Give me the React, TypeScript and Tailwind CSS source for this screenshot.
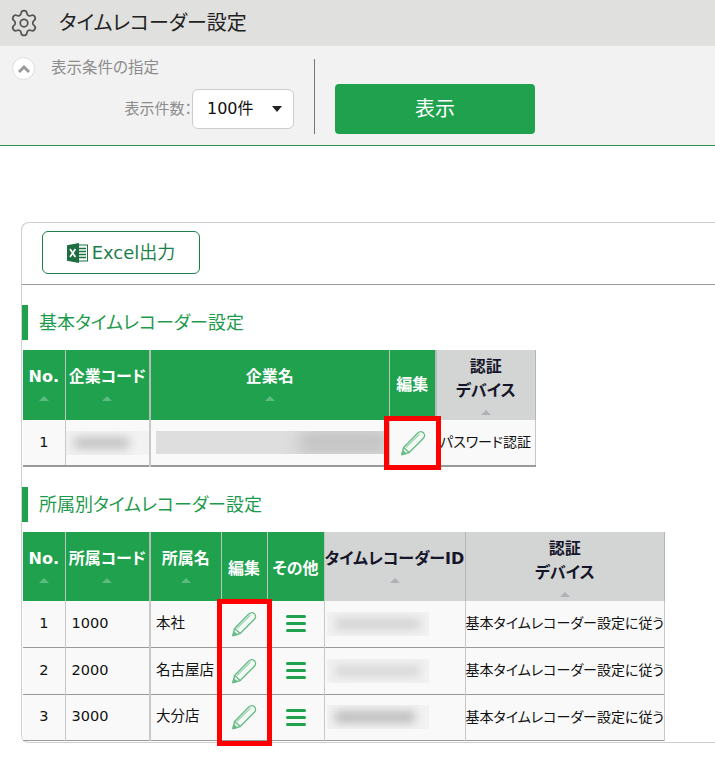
import { Settings } from "lucide-react";

const FONT = "font-['DejaVu_Sans','Noto_Sans_CJK_JP',sans-serif] [font-feature-settings:'palt']";

function Pencil() {
  return (
    <svg viewBox="0 0 26 26" className="h-[26px] w-[26px]" fill="none" stroke="#68bb86" strokeWidth="1.4" strokeLinejoin="round">
      <path d="M2 24.5 L3.6 17.4 L17.8 3 C19.2 1.6 21.6 1.3 23.4 2.8 C25 4.4 24.8 6.8 23.4 8.2 L9.2 22.6 Z" fill="#f3faf6" />
      <path d="M3.6 17.4 L9.2 22.6" />
      <path d="M2 24.5 L2.8 20.9 L5.7 23.6 Z" fill="#68bb86" />
      <path d="M6 17.5 L19.6 4" strokeWidth="1" />
    </svg>
  );
}

function Burger() {
  return (
    <div className="flex w-5 flex-col gap-1">
      <span className="h-[3px] rounded-sm bg-[#1fa14e]" />
      <span className="h-[3px] rounded-sm bg-[#1fa14e]" />
      <span className="h-[3px] rounded-sm bg-[#1fa14e]" />
    </div>
  );
}

function ExcelIcon() {
  return (
    <svg viewBox="0 0 21 20" className="h-5 w-[21px]">
      <rect x="9" y="2" width="11.5" height="16" fill="#fff" stroke="#1d6f42" strokeWidth="1" />
      <path d="M12 5.5h7M12 8.5h7M12 11.5h7M12 14.5h7" stroke="#1d6f42" strokeWidth="1.6" />
      <path d="M0 2.2 L12 0 V20 L0 17.8 Z" fill="#1d6f42" />
      <path d="M3 6 L8.4 14 M8.4 6 L3 14" stroke="#fff" strokeWidth="1.7" />
    </svg>
  );
}

function Sort() {
  return <span className="mx-auto mt-[7px] block h-0 w-0 border-x-[5px] border-b-[5px] border-x-transparent border-b-[#5dba80]" />;
}

function SortGray() {
  return <span className="mx-auto mt-[7px] block h-0 w-0 border-x-[5px] border-b-[5px] border-x-transparent border-b-[#aeb2b6]" />;
}

function Blur({ w, tone }: { w: string; tone: string }) {
  return (
    <div className="h-6 overflow-hidden bg-[#f2f2f2]">
      <div className={`ml-2 mt-[6px] h-3 blur-[5px] ${w} ${tone}`} />
    </div>
  );
}

const GH = "border-r border-[#b7c9bd] bg-[#1fa14e] p-0 text-center align-middle text-[16px] font-bold leading-6 text-white";
const GYH = "border-r border-[#b4b6b6] bg-[#d3d5d5] p-0 text-center align-middle text-[16px] font-bold leading-6 text-[#16162a]";
const TD = "border-r border-[#c8c8c8] bg-[#f9f9f9] p-0 text-[14.5px] text-[#111]";

function SectionTitle({ children }: { children: string }) {
  return (
    <div className="flex h-[35px] items-center">
      <span className="h-full w-[6px] bg-[#1fa14e]" />
      <h2 className="ml-[11px] text-[18px] font-normal text-[#1e9a4c]">{children}</h2>
    </div>
  );
}

const ROWS = [
  { no: 1, code: "1000", name: "本社", h: "h-[46px]", w: "w-[85px]", tone: "bg-[#d4d4d4]" },
  { no: 2, code: "2000", name: "名古屋店", h: "h-[47px]", w: "w-[85px]", tone: "bg-[#d8d8d8]" },
  { no: 3, code: "3000", name: "大分店", h: "h-[46px]", w: "w-[80px]", tone: "bg-[#bdbdbd]" },
];

export default function App() {
  return (
    <div className={`relative h-[757px] w-[715px] overflow-hidden bg-white ${FONT}`}>
      <header className="flex h-[46px] items-center bg-[#e0e0de] pl-[9px]">
        <Settings className="h-[30px] w-[30px] text-[#555]" strokeWidth={1.4} />
        <h1 className="ml-[20px] text-[20px] font-normal text-[#222]">タイムレコーダー設定</h1>
      </header>

      <section className="flex h-[100px] border-b border-[#2f8f57] bg-[#f2f2f2]">
        <div className="relative mb-[11px] mt-[13px] w-[315px] border-r border-[#777]">
          <div className="-mt-[2px] flex items-center pl-3">
            <span className="flex h-[23px] w-[23px] items-center justify-center rounded-full border border-[#ddd] bg-white">
              <svg viewBox="0 0 14 10" className="h-[10px] w-[14px]" fill="none" stroke="#9a9a9a" strokeWidth="3">
                <path d="M2 8 L7 3 L12 8" />
              </svg>
            </span>
            <span className="ml-4 text-[15.5px] text-[#8c8c8c]">表示条件の指定</span>
          </div>
          <div className="mt-[9px] flex items-center justify-end pr-5">
            <span className="text-[15px] text-[#8c8c8c]">表示件数：</span>
            <div className="flex h-10 w-[102px] items-center justify-between rounded-md border border-[#ccc] bg-white pl-[14px] pr-[11px]">
              <span className="text-[16px] text-[#111]">100件</span>
              <span className="h-0 w-0 border-x-[5px] border-t-[6px] border-x-transparent border-t-[#222]" />
            </div>
          </div>
        </div>
        <div className="ml-5 mt-[38px]">
          <button className="h-[50px] w-[200px] rounded bg-[#1fa14e] text-[20px] text-white">表示</button>
        </div>
      </section>

      <main className="ml-[21px] mt-[76px] h-[521px] w-[720px] rounded-l-lg border border-r-0 border-[#cfcfcf]">
        <div className="h-[62px] border-b border-[#999] pl-5 pt-2">
          <button className="flex h-[43px] w-[158px] items-center justify-center gap-1 rounded-md border border-[#1e7f4a] text-[18px] text-[#1f7f4c]">
            <ExcelIcon />
            Excel出力
          </button>
        </div>

        <div className="mt-5">
          <SectionTitle>基本タイムレコーダー設定</SectionTitle>
        </div>
        <table className="ml-px mt-[10px] table-fixed border-collapse">
          <colgroup>
            <col className="w-[42px]" />
            <col className="w-[85px]" />
            <col className="w-[239px]" />
            <col className="w-[47px]" />
            <col className="w-[99px]" />
          </colgroup>
          <thead>
            <tr className="h-[70px]">
              <th className={GH}><div className="-mt-1">No.<Sort /></div></th>
              <th className={`${GH} border-r-2 border-r-[#b5bdb8]`}><div className="-mt-1">企業コード<Sort /></div></th>
              <th className={GH}><div className="-mt-1">企業名<Sort /></div></th>
              <th className={`${GH} border-r-2 border-r-[#b5bdb8]`}>編集</th>
              <th className={GYH}>
                <div>認証<br />デバイス<SortGray /></div>
              </th>
            </tr>
          </thead>
          <tbody>
            <tr className="h-[46px] border-b-2 border-[#999]">
              <td className={`${TD} text-center`}>1</td>
              <td className={`${TD} border-r-2`}><Blur w="w-[55px]" tone="bg-[#c4c4c4]" /></td>
              <td className={`${TD} pl-[5px]`}>
                <div className="h-[23px] overflow-hidden bg-[#dedede]"><div className="ml-auto h-full w-[90px] bg-[#c2c2c2] blur-[8px]" /></div>
              </td>
              <td className={`${TD} bg-[#e2f2e8]`}><div className="flex justify-center"><Pencil /></div></td>
              <td className={`${TD} whitespace-nowrap text-center text-[14px]`}>パスワード認証</td>
            </tr>
          </tbody>
        </table>

        <div className="mt-[20px]">
          <SectionTitle>所属別タイムレコーダー設定</SectionTitle>
        </div>
        <table className="ml-px mt-[10px] table-fixed border-collapse">
          <colgroup>
            <col className="w-[42px]" />
            <col className="w-[85px]" />
            <col className="w-[71px]" />
            <col className="w-[46px]" />
            <col className="w-[57px]" />
            <col className="w-[141px]" />
            <col className="w-[198px]" />
          </colgroup>
          <thead>
            <tr className="h-[69px]">
              <th className={GH}><div className="-mt-1">No.<Sort /></div></th>
              <th className={`${GH} border-r-2 border-r-[#b5bdb8]`}><div className="-mt-1">所属コード<Sort /></div></th>
              <th className={GH}><div className="-mt-1">所属名<Sort /></div></th>
              <th className={GH}><div className="mt-1">編集</div></th>
              <th className={GH}><div className="mt-1">その他</div></th>
              <th className={GYH}><div className="-mt-1">タイムレコーダーID<SortGray /></div></th>
              <th className={GYH}>
                <div>認証<br />デバイス<SortGray /></div>
              </th>
            </tr>
          </thead>
          <tbody>
            {ROWS.map((row) => (
              <tr key={row.no} className={`${row.h} border-b border-[#999]`}>
                <td className={`${TD} text-center`}>{row.no}</td>
                <td className={`${TD} border-r-2 pl-[6px]`}>{row.code}</td>
                <td className={`${TD} whitespace-nowrap pl-[5px]`}>{row.name}</td>
                <td className={`${TD} bg-[#e2f2e8]`}><div className="flex justify-center"><Pencil /></div></td>
                <td className={`${TD} bg-[#e2f2e8]`}><div className="flex justify-center"><Burger /></div></td>
                <td className={`${TD} pl-[2px] pr-[36px]`}><Blur w={row.w} tone={row.tone} /></td>
                <td className={`${TD} whitespace-nowrap text-center text-[14px]`}>基本タイムレコーダー設定に従う</td>
              </tr>
            ))}
          </tbody>
        </table>
      </main>

      {/* red highlight boxes over the edit columns */}
      <div className="absolute left-[384px] top-[416px] h-[54px] w-[57px] border-[5px] border-[#f00]" />
      <div className="absolute left-[217px] top-[599px] h-[147px] w-[55px] border-[5px] border-[#f00]" />
    </div>
  );
}
